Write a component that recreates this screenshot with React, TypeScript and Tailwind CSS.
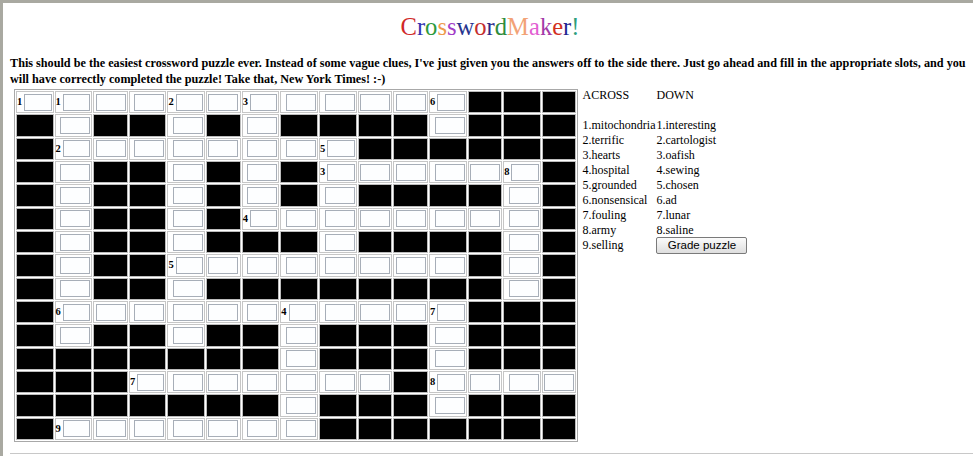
import { ReactNode } from "react";

const TITLE: [string, string][] = [
  ["C", "#d02828"],
  ["r", "#3434b0"],
  ["o", "#2c9a3c"],
  ["s", "#ee9a4c"],
  ["s", "#a23cc8"],
  ["w", "#26358f"],
  ["o", "#c42e2e"],
  ["r", "#2a2a8a"],
  ["d", "#2e8c3c"],
  ["M", "#f2a276"],
  ["a", "#e25ed2"],
  ["k", "#a43aa8"],
  ["e", "#d2301e"],
  ["r", "#1f2590"],
  ["!", "#2e9e7c"],
];

// '#' = black square, '.' = empty slot, digit = numbered slot
const GRID = [
  "11..2.3....6###",
  "#.##.#.####.###",
  "#2......5######",
  "#.##.#.#3....8#",
  "#.##.#.#.####.#",
  "#.##.#4.......#",
  "#.##.###.####.#",
  "#.##5.......#.#",
  "#.##.########.#",
  "#6.....4...7###",
  "#.##.##.###.###",
  "#######.###.###",
  "###7......#8...",
  "#######.###.###",
  "#9......#######",
];

const LABEL_COLS = [0, 1, 3, 4, 6, 7, 8, 11, 13];

const ACROSS = ["mitochondria", "terrific", "hearts", "hospital", "grounded", "nonsensical", "fouling", "army", "selling"];
const DOWN = ["interesting", "cartologist", "oafish", "sewing", "chosen", "ad", "lunar", "saline"];

export default function App() {
  return (
    <div className="min-h-[456px] bg-white border-t-[3px] border-l-[3px] border-[#a9a9a1] font-['Liberation_Serif',serif] text-black overflow-hidden">
      {/* Title */}
      <h1 className="pt-[10px] pl-[4px] text-center text-[24.6px] leading-[28px]">
        {TITLE.map(([ch, color], i) => (
          <span key={i} style={{ color }}>
            {ch}
          </span>
        ))}
      </h1>

      {/* Intro */}
      <p className="mt-[14px] pl-[7px] pr-0 text-[12.2px] leading-[16px] font-bold">
        This should be the easiest crossword puzzle ever. Instead of some vague clues, I've just given you the answers
        off to the side there. Just go ahead and fill in the appropriate slots, and you will have correctly completed the
        puzzle! Take that, New York Times! :-)
      </p>

      <div className="flex items-start mt-[2px] pl-[11px]">
        {/* Puzzle grid */}
        <div className="grid grid-cols-[37.6px_37.6px_34.7px_37.6px_37.6px_34.7px_37.6px_37.6px_37.6px_34.7px_34.7px_37.6px_34.7px_37.6px_34.7px] grid-rows-[repeat(15,22.35px)] gap-px p-px border border-[#a8a8a8] bg-white">
          {GRID.flatMap((row, r) =>
            row.split("").map((ch, c) => (
              <Cell key={`${r}-${c}`} ch={ch} wide={LABEL_COLS.includes(c)} />
            ))
          )}
        </div>

        {/* Answers */}
        <div className="ml-[4px] grid grid-cols-[74px_auto] text-[12px] leading-[15px] -mt-[1px]">
          <Clue>ACROSS</Clue>
          <Clue>DOWN</Clue>
          <Clue>&nbsp;</Clue>
          <Clue>&nbsp;</Clue>
          {ACROSS.map((a, i) => (
            <Row key={a} left={`${i + 1}.${a}`} right={DOWN[i] ? `${i + 1}.${DOWN[i]}` : null} />
          ))}
        </div>
      </div>

      <hr className="mt-[11px] ml-[7px] border-t border-[#c8c8c8]" />
    </div>
  );
}

function Cell({ ch, wide }: { ch: string; wide: boolean }) {
  if (ch === "#") {
    return <div className="bg-black border border-[#bcbcbc]" />;
  }
  const label = ch !== "." ? ch : null;
  return (
    <div
      className={`flex items-center border border-[#c6c6c6] ${wide ? "justify-end pr-[1px]" : "justify-center"}`}
    >
      {label && <span className="mr-[2px] text-[10.5px] leading-none font-bold">{label}</span>}
      <div className="w-[30px] h-[17px] border border-[#a7aeb8] bg-[#fdfeff]" />
    </div>
  );
}

function Clue({ children }: { children: ReactNode }) {
  return <div className="whitespace-nowrap">{children}</div>;
}

function Row({ left, right }: { left: string; right: string | null }) {
  return (
    <>
      <Clue>{left}</Clue>
      {right ? (
        <Clue>{right}</Clue>
      ) : (
        <div>
          <button className="w-[91px] h-[17px] mt-[-1px] rounded-[2px] border border-[#7a7a7a] bg-gradient-to-b from-[#fbfbfb] to-[#dedede] font-['Liberation_Sans',sans-serif] text-[11.5px] leading-none text-black">
            Grade puzzle
          </button>
        </div>
      )}
    </>
  );
}
